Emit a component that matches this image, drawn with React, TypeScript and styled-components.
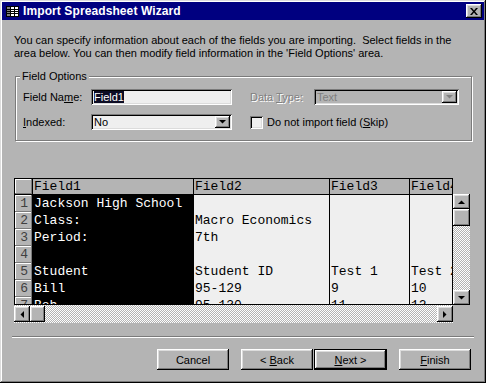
import React from "react";
import styled, { createGlobalStyle, css } from "styled-components";

const FACE = "#b4b4b4";
const SHADOW = "#7b7b7b";
const LIGHT = "#dcdcdc";
const FIELD = "#efefef";

const GlobalStyle = createGlobalStyle`
  html, body { margin: 0; padding: 0; background: ${FACE}; }
  body { font-family: "Liberation Sans", Arial, sans-serif; }
  #root { width: 486px; height: 383px; }
`;

const raised = css`
  box-shadow: inset -1px -1px #000, inset 1px 1px #fff, inset -2px -2px ${SHADOW}, inset 2px 2px ${LIGHT};
`;

const sunken = css`
  box-shadow: inset 1px 1px ${SHADOW}, inset -1px -1px #fff, inset 2px 2px #000, inset -2px -2px ${LIGHT};
`;

const Window = styled.div`
  width: 486px;
  height: 383px;
  box-sizing: border-box;
  padding: 2px;
  background: ${FACE};
  box-shadow: inset -1px -1px #000, inset 1px 1px ${LIGHT}, inset -2px -2px ${SHADOW}, inset 2px 2px #fff;
  display: flex;
  flex-direction: column;
  font-size: 11px;
  color: #000;
`;

const TitleBar = styled.div`
  height: 18px;
  background: #000080;
  display: flex;
  align-items: center;
  padding: 0 2px 0 4px;
  gap: 4px;
  color: #fff;
  font-weight: bold;
  font-size: 12px;
`;

const TitleText = styled.span`
  flex: 1;
  letter-spacing: 0.1px;
`;

const CloseButton = styled.div`
  width: 16px;
  height: 14px;
  background: ${FACE};
  ${raised};
  display: flex;
  align-items: center;
  justify-content: center;
`;

const Body = styled.div`
  flex: 1;
  display: flex;
  flex-direction: column;
  padding: 14px 12px 0 12px;
`;

const Intro = styled.p`
  margin: 0;
  line-height: 13px;
  white-space: pre;
`;

const GroupBox = styled.fieldset`
  margin: 10px 0 0 1px;
  padding: 6px 6px 10px 7px;
  border: 1px solid ${SHADOW};
  box-shadow: inset 1px 1px #fff, 1px 1px #fff;
  min-width: 0;
`;

const Legend = styled.legend`
  padding: 0 2px;
  margin-left: -3px;
  line-height: 13px;
  background: ${FACE};
`;

const OptionsGrid = styled.div`
  display: grid;
  grid-template-columns: 68px 141px 18px 64px 145px;
  grid-auto-rows: 16px;
  row-gap: 9px;
  align-items: center;
`;

const Label = styled.span<{ $disabled?: boolean }>`
  color: ${(p) => (p.$disabled ? "#808080" : "#000")};
  text-shadow: ${(p) => (p.$disabled ? "1px 1px #fff" : "none")};
`;

const TextBox = styled.div<{ $disabled?: boolean }>`
  height: 16px;
  box-sizing: border-box;
  background: ${(p) => (p.$disabled ? FACE : FIELD)};
  ${sunken};
  display: flex;
  align-items: center;
  padding: 0 2px 0 3px;
  color: ${(p) => (p.$disabled ? "#808080" : "#000")};
`;

const Selected = styled.span`
  background: #0c0c24;
  color: #fff;
  line-height: 12px;
`;

const ComboValue = styled.span`
  flex: 1;
`;

const DropButton = styled.div`
  width: 15px;
  height: 12px;
  background: ${FACE};
  ${raised};
  display: flex;
  align-items: center;
  justify-content: center;
`;

const CheckRow = styled.label`
  grid-column: 4 / span 2;
  display: flex;
  align-items: center;
  gap: 4px;
`;

const CheckBox = styled.span`
  width: 13px;
  height: 13px;
  background: ${FIELD};
  ${sunken};
`;

const GridArea = styled.div`
  margin-top: 37px;
  display: grid;
  grid-template-columns: 439px 17px;
  grid-template-rows: 16px 111px 18px;
  width: 456px;
`;

const Sheet = styled.div`
  grid-column: 1;
  grid-row: 1 / span 2;
  border: 1px solid #000;
  overflow: hidden;
  background: ${FIELD};
  font-family: "Liberation Mono", "Courier New", monospace;
  font-size: 13px;
`;

const Row = styled.div<{ $head?: boolean }>`
  display: flex;
  height: ${(p) => (p.$head ? "15px" : "17px")};
  border-bottom: ${(p) => (p.$head ? "1px solid #000" : "none")};
  line-height: ${(p) => (p.$head ? "15px" : "17px")};
`;

const RowHead = styled.div`
  width: 18px;
  flex-shrink: 0;
  box-sizing: border-box;
  background: ${FACE};
  box-shadow: inset -1px -1px ${SHADOW}, inset 1px 1px #fff;
  border-right: 1px solid #000;
  text-align: right;
  padding-right: 4px;
  color: #404040;
  font-size: 13px;
`;

const Cell = styled.div<{ $w: number; $sel?: boolean; $head?: boolean }>`
  width: ${(p) => p.$w}px;
  flex-shrink: 0;
  box-sizing: border-box;
  border-right: 1px solid #000;
  padding-left: 1px;
  white-space: pre;
  overflow: hidden;
  background: ${(p) => (p.$head ? FACE : p.$sel ? "#000" : FIELD)};
  color: ${(p) => (p.$sel && !p.$head ? "#fff" : "#000")};
`;

const Track = styled.div<{ $vertical?: boolean }>`
  display: flex;
  flex-direction: ${(p) => (p.$vertical ? "column" : "row")};
  background: repeating-conic-gradient(#fff 0 25%, ${FACE} 0 50%) 0 0 / 2px 2px;
`;

const VTrack = styled(Track)`
  grid-column: 2;
  grid-row: 2;
`;

const HTrack = styled(Track)`
  grid-column: 1;
  grid-row: 3;
  padding: 1px 0;
  align-items: center;
`;

const ScrollButton = styled.div<{ $vertical?: boolean }>`
  width: ${(p) => (p.$vertical ? "17px" : "16px")};
  height: ${(p) => (p.$vertical ? "15px" : "16px")};
  flex-shrink: 0;
  background: ${FACE};
  ${raised};
  display: flex;
  align-items: center;
  justify-content: center;
`;

const Thumb = styled(ScrollButton)`
  width: ${(p) => (p.$vertical ? "17px" : "15px")};
  height: ${(p) => (p.$vertical ? "17px" : "16px")};
`;

const Spacer = styled.div`
  flex: 1;
`;

const Separator = styled.div`
  margin: 13px -2px 0 -2px;
  border-top: 1px solid ${SHADOW};
  border-bottom: 1px solid #fff;
`;

const ButtonRow = styled.div`
  margin-top: 11px;
  display: flex;
  justify-content: flex-end;
  padding-right: 1px;
`;

const Button = styled.button<{ $default?: boolean; $gap?: number }>`
  width: ${(p) => (p.$default ? 73 : 72)}px;
  height: 21px;
  margin-left: ${(p) => p.$gap ?? 0}px;
  padding: 0;
  font-family: "Liberation Sans", Arial, sans-serif;
  font-size: 11px;
  color: #000;
  background: ${FACE};
  border: ${(p) => (p.$default ? "1px solid #000" : "none")};
  ${raised};
`;

const Arrow = ({ dir }: { dir: "up" | "down" | "left" | "right" }) => {
  const pts = {
    up: "0,4 7,4 3.5,0.5",
    down: "0,0 7,0 3.5,3.5",
    left: "4,0 4,7 0.5,3.5",
    right: "0,0 0,7 3.5,3.5",
  }[dir];
  const vert = dir === "up" || dir === "down";
  return (
    <svg width={vert ? 7 : 4} height={vert ? 4 : 7} viewBox={vert ? "0 0 7 4" : "0 0 4 7"}>
      <polygon points={pts} fill="#000" />
    </svg>
  );
};

const SmallArrow = ({ color }: { color: string }) => (
  <svg width="7" height="4" viewBox="0 0 7 4">
    <polygon points="0,0 7,0 3.5,3.5" fill={color} />
  </svg>
);

const TableIcon = () => (
  <svg width="13" height="11" viewBox="0 0 13 11">
    <rect x="0.5" y="0.5" width="12" height="10" fill="#fff" stroke="#000" />
    <rect x="1" y="1" width="3" height="9" fill="#808080" />
    <line x1="4.5" y1="0.5" x2="4.5" y2="10.5" stroke="#000" />
    <line x1="0.5" y1="3.5" x2="12.5" y2="3.5" stroke="#000" />
    <line x1="0.5" y1="5.5" x2="12.5" y2="5.5" stroke="#000" />
    <line x1="0.5" y1="7.5" x2="12.5" y2="7.5" stroke="#000" />
    <line x1="8.5" y1="0.5" x2="8.5" y2="10.5" stroke="#000" />
  </svg>
);

const CloseIcon = () => (
  <svg width="8" height="7" viewBox="0 0 8 7">
    <path d="M0 0 L2 0 L4 2.5 L6 0 L8 0 L5 3.5 L8 7 L6 7 L4 4.5 L2 7 L0 7 L3 3.5 Z" fill="#000" />
  </svg>
);

// column widths include the right grid line
const columns = [161, 136, 80, 50];
const headers = ["Field1", "Field2", "Field3", "Field4"];
const rows = [
  ["Jackson High School", "", "", ""],
  ["Class:", "Macro Economics", "", ""],
  ["Period:", "7th", "", ""],
  ["", "", "", ""],
  ["Student", "Student ID", "Test 1", "Test 2"],
  ["Bill", "95-129", "9", "10"],
  ["Bob", "95-130", "11", "12"],
];

export default function App() {
  return (
    <>
      <GlobalStyle />
      <Window>
        <TitleBar>
          <TableIcon />
          <TitleText>Import Spreadsheet Wizard</TitleText>
          <CloseButton>
            <CloseIcon />
          </CloseButton>
        </TitleBar>
        <Body>
          <Intro>
            {"You can specify information about each of the fields you are importing.  Select fields in the\narea below. You can then modify field information in the 'Field Options' area."}
          </Intro>
          <GroupBox>
            <Legend>Field Options</Legend>
            <OptionsGrid>
              <Label>
                Field Na<u>m</u>e:
              </Label>
              <TextBox>
                <Selected>Field1</Selected>
              </TextBox>
              <span />
              <Label $disabled>
                Data <u>T</u>ype:
              </Label>
              <TextBox $disabled>
                <ComboValue>Text</ComboValue>
                <DropButton>
                  <SmallArrow color="#808080" />
                </DropButton>
              </TextBox>
              <Label>
                <u>I</u>ndexed:
              </Label>
              <TextBox>
                <ComboValue>No</ComboValue>
                <DropButton>
                  <SmallArrow color="#000" />
                </DropButton>
              </TextBox>
              <span />
              <CheckRow>
                <CheckBox />
                <span>
                  Do not import field (<u>S</u>kip)
                </span>
              </CheckRow>
            </OptionsGrid>
          </GroupBox>
          <GridArea>
            <Sheet>
              <Row $head>
                <RowHead />
                {headers.map((h, i) => (
                  <Cell key={h} $w={columns[i]} $head>
                    {h}
                  </Cell>
                ))}
              </Row>
              {rows.map((r, ri) => (
                <Row key={ri}>
                  <RowHead>{ri + 1}</RowHead>
                  {r.map((c, ci) => (
                    <Cell key={ci} $w={columns[ci]} $sel={ci === 0}>
                      {c}
                    </Cell>
                  ))}
                </Row>
              ))}
            </Sheet>
            <VTrack $vertical>
              <ScrollButton $vertical>
                <Arrow dir="up" />
              </ScrollButton>
              <Thumb $vertical />
              <Spacer />
              <ScrollButton $vertical>
                <Arrow dir="down" />
              </ScrollButton>
            </VTrack>
            <HTrack>
              <ScrollButton>
                <Arrow dir="left" />
              </ScrollButton>
              <Thumb />
              <Spacer />
              <ScrollButton>
                <Arrow dir="right" />
              </ScrollButton>
            </HTrack>
          </GridArea>
          <Separator />
          <ButtonRow>
            <Button>Cancel</Button>
            <Button $gap={12}>
              &lt; <u>B</u>ack
            </Button>
            <Button $default $gap={1}>
              <u>N</u>ext &gt;
            </Button>
            <Button $gap={12}>
              <u>F</u>inish
            </Button>
          </ButtonRow>
        </Body>
      </Window>
    </>
  );
}
